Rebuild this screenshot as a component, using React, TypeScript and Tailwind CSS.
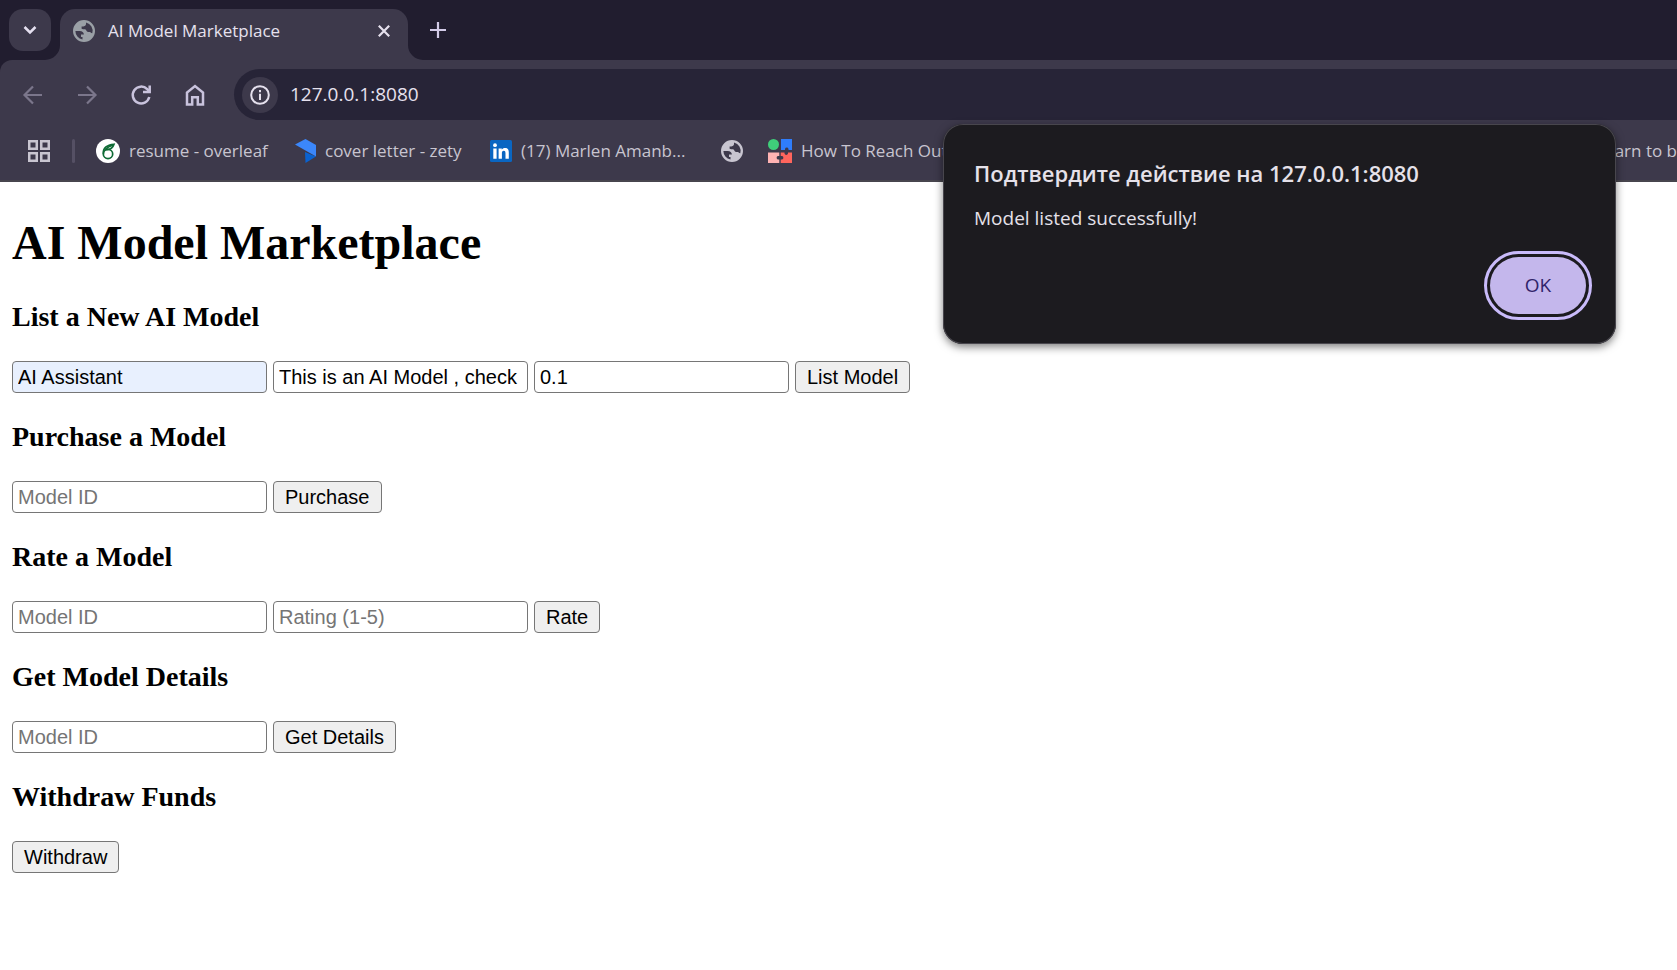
import React, { useState } from "react";

const uiFont = "font-['Open_Sans',sans-serif]";

function Globe({ className }: { className: string }) {
  return (
    <svg viewBox="0 0 22 22" className={className} aria-hidden="true">
      <path
        fill="currentColor"
        fillRule="evenodd"
        d="M11 0a11 11 0 1 0 0 22a11 11 0 0 0 0-22ZM2.400 11H6.800C9.300 11 10.700 12.300 10.900 14.600H8V17H9.500V19.600A8.700 8.700 0 0 1 2.400 11ZM13 2.500V4.200C13 6 11 6.500 8.600 6.500V8.700C9.300 9.300 11 9 12 9.300C13.600 9.800 13.300 11.900 15 11.900H16.800C17.800 11.900 17.600 13 19.300 13.300A8.700 8.700 0 0 0 13 2.500Z"
      />
    </svg>
  );
}

function Overleaf() {
  return (
    <svg viewBox="0 0 24 24" className="size-6 shrink-0" aria-hidden="true">
      <circle cx="12" cy="12" r="12" fill="#fff" />
      <g fill="none" stroke="#0f6b35" strokeWidth="1.700" strokeLinecap="round">
        <ellipse cx="12" cy="15" rx="4.700" ry="4.600" />
        <path d="M7.400 14.500C6.800 9.500 10.500 5.800 18 5.300C16.800 9 13.500 10.600 10.800 10.600" />
        <path d="M9.800 10.200C11.500 8.500 13.500 7.200 16 6.500" />
      </g>
    </svg>
  );
}

function Zety() {
  return (
    <svg viewBox="0 0 21 24" className="h-6 w-[21px] shrink-0" aria-hidden="true">
      <path fill="#0a62d0" d="M10 13L21 17.500L10.500 24Z" />
      <path fill="#3b87fb" d="M0 5.500L10.500 0L21 6V17.500Z" />
    </svg>
  );
}

function LinkedIn() {
  return (
    <svg viewBox="0 0 22 22" className="size-[22px] shrink-0" aria-hidden="true">
      <rect width="22" height="22" rx="1.500" fill="#0a66c2" />
      <g fill="#fff">
        <circle cx="5" cy="5.200" r="1.900" />
        <path d="M3.300 8.400h3.300v10.300H3.300ZM8.600 8.400h3.200v1.400c.6-1 1.700-1.700 3.200-1.700 3 0 3.800 2 3.800 4.600v6h-3.300v-5.300c0-1.300-.2-2.600-1.700-2.600s-1.900 1.200-1.900 2.500v5.400H8.600Z" />
      </g>
    </svg>
  );
}

function Puzzle() {
  return (
    <svg viewBox="0 0 24 24" className="size-6 shrink-0" aria-hidden="true">
      <circle cx="5.500" cy="5.500" r="5.500" fill="#3fcf7a" />
      <path fill="#2f7dfb" d="M13 0H24V11H20.500V10A1.800 1.800 0 0 0 17 10V11H13Z" />
      <path fill="#ffb3b3" d="M0 13.500H11.300V17H10A1.800 1.800 0 0 0 10 20.500H11.300V24H0Z" />
      <path fill="#ff655d" d="M12.700 13.500H16.500V14.500A1.800 1.800 0 0 0 20 14.500V13.500H24V24H12.700V20.500H14A1.800 1.800 0 0 0 14 17H12.700Z" />
    </svg>
  );
}

function Bookmark({
  icon,
  label,
  className = "",
}: {
  icon: React.ReactNode;
  label?: string;
  className?: string;
}) {
  return (
    <a href="#" className={`flex shrink-0 items-center gap-[9px] whitespace-nowrap ${className}`}>
      {icon}
      {label && <span>{label}</span>}
    </a>
  );
}

function ToolButton({ label, muted, children }: { label: string; muted?: boolean; children: React.ReactNode }) {
  return (
    <button
      type="button"
      aria-label={label}
      className={`grid size-[54px] place-items-center ${muted ? "text-[#7b768b]" : "text-[#c9c3dd]"}`}
    >
      <svg viewBox="0 0 24 24" className="size-6" fill="none" stroke="currentColor" strokeWidth="2.200">
        {children}
      </svg>
    </button>
  );
}

function Chrome() {
  return (
    <header className={`bg-[#211d2f] ${uiFont}`}>
      <div className="flex h-[60px] items-end">
        <button
          type="button"
          aria-label="Search tabs"
          className="mb-[9px] ml-[9px] grid size-[42px] place-items-center rounded-[14px] bg-[#3d394b] text-[#e5e0f0]"
        >
          <svg viewBox="0 0 14 10" className="h-[10px] w-[14px]" fill="none" stroke="currentColor" strokeWidth="2.500">
            <path d="M1.500 2L7 7.500L12.500 2" />
          </svg>
        </button>
        <div className="relative ml-[9px] flex h-[51px] w-[348px] items-center rounded-t-[15px] bg-[#3d394b] pr-[15px] pb-2 pl-[13px]">
          <svg viewBox="0 0 15 15" className="absolute bottom-0 -left-[15px] size-[15px] text-[#3d394b]" aria-hidden="true">
            <path fill="currentColor" d="M15 0V15H0A15 15 0 0 0 15 0Z" />
          </svg>
          <svg viewBox="0 0 15 15" className="absolute -right-[15px] bottom-0 size-[15px] text-[#3d394b]" aria-hidden="true">
            <path fill="currentColor" d="M0 0V15H15A15 15 0 0 1 0 0Z" />
          </svg>
          <Globe className="size-[22px] text-[#9aa0a6]" />
          <span className="ml-[13px] flex-1 text-[17px] whitespace-nowrap text-[#e6e1ee]">AI Model Marketplace</span>
          <button type="button" aria-label="Close tab" className="grid size-[18px] place-items-center text-[#e6e1ee]">
            <svg viewBox="0 0 12 12" className="size-3" fill="none" stroke="currentColor" strokeWidth="2.200">
              <path d="M.8 .8L11.200 11.200M11.200 .8L.8 11.200" />
            </svg>
          </button>
        </div>
        <button type="button" aria-label="New tab" className="mb-[21px] ml-[21px] grid size-[18px] place-items-center text-[#d3cbe8]">
          <svg viewBox="0 0 16 16" className="size-4" fill="none" stroke="currentColor" strokeWidth="2.200">
            <path d="M8 0V16M0 8H16" />
          </svg>
        </button>
      </div>

      <div className="bg-[#211d2f]">
        <div className="rounded-tl-[12px] bg-[#3d394b]">
          <div className="flex h-[69px] items-center pl-[6px]">
            <ToolButton label="Back" muted>
              <path d="M21 12H4M12 3.500L3.500 12L12 20.500" />
            </ToolButton>
            <ToolButton label="Forward" muted>
              <path d="M3 12H20M12 3.500L20.500 12L12 20.500" />
            </ToolButton>
            <ToolButton label="Reload">
              <path d="M20.300 14A8.400 8.400 0 1 1 18.200 6.200L20 8" strokeWidth="2.500" />
              <path d="M20.700 2.500V9H14" strokeWidth="2.500" />
            </ToolButton>
            <ToolButton label="Home">
              <path d="M4 21.500V9.500L12 3L20 9.500V21.500H14.800V14.200H9.200V21.500Z" strokeWidth="2.500" />
            </ToolButton>
            <div className="ml-3 flex h-[51px] flex-1 items-center rounded-l-full bg-[#272437] pl-2">
              <button
                type="button"
                aria-label="View site information"
                className="grid size-9 place-items-center rounded-full bg-[#3d394b] text-[#e6e1ee]"
              >
                <svg viewBox="0 0 20 20" className="size-5" fill="none" stroke="currentColor" strokeWidth="2">
                  <circle cx="10" cy="10" r="8.800" />
                  <path d="M10 8.800V15M10 5V7.200" />
                </svg>
              </button>
              <input
                aria-label="Address and search bar"
                defaultValue="127.0.0.1:8080"
                className="ml-3 min-w-0 flex-1 bg-transparent text-[19px] text-[#e6e1ee] outline-none"
              />
            </div>
          </div>

          <nav
            aria-label="Bookmarks"
            className="flex h-[53px] items-center overflow-hidden border-b-2 border-[#47454d] pb-2 pl-7 text-[17px] text-[#c8c5d0]"
          >
            <button type="button" aria-label="Apps" className="shrink-0">
              <svg viewBox="0 0 22 22" className="size-[22px]" fill="none" stroke="currentColor" strokeWidth="2.500">
                <path d="M1.250 1.250h7.500v7.500h-7.500ZM13.250 1.250h7.500v7.500h-7.500ZM1.250 13.250h7.500v7.500h-7.500ZM13.250 13.250h7.500v7.500h-7.500Z" />
              </svg>
            </button>
            <span className="ml-[22px] h-6 w-[3px] shrink-0 rounded-full bg-[#555064]" />
            <Bookmark className="ml-[21px] w-[199px]" icon={<Overleaf />} label="resume - overleaf" />
            <Bookmark className="w-[195px]" icon={<Zety />} label="cover letter - zety" />
            <Bookmark className="w-[231px]" icon={<LinkedIn />} label="(17) Marlen Amanb..." />
            <Bookmark className="w-[47px]" icon={<Globe className="size-[22px]" />} />
            <Bookmark className="w-[200px]" icon={<Puzzle />} label="How To Reach Out" />
            <Bookmark className="ml-auto" icon={null} label="Learn to b" />
          </nav>
        </div>
      </div>
    </header>
  );
}

const fieldClass =
  "h-8 w-[255px] rounded-[4px] border border-[#767676] px-[5px] text-[20px] leading-6 text-black placeholder:text-[#757575]";
const buttonClass =
  "h-8 rounded-[4px] border border-[#767676] bg-[#efefef] px-[11px] text-[20px] leading-6 text-black";

type Field = { label: string; value?: string; autofilled?: boolean };

function Section({ title, fields, action }: { title: string; fields: Field[]; action: string }) {
  return (
    <section className="flex flex-col gap-7">
      <h3 className="font-['Liberation_Serif',serif] text-[28px] leading-8 font-bold">{title}</h3>
      <form onSubmit={(e) => e.preventDefault()} className="flex gap-[6px] font-['Liberation_Sans',sans-serif]">
        {fields.map((f) => (
          <input
            key={f.label}
            aria-label={f.label}
            placeholder={f.label}
            defaultValue={f.value}
            className={`${fieldClass} ${f.autofilled ? "bg-[#e8f0fe]" : "bg-white"}`}
          />
        ))}
        <button type="submit" className={buttonClass}>
          {action}
        </button>
      </form>
    </section>
  );
}

export default function App() {
  const [open, setOpen] = useState(true);
  return (
    <div className="relative min-h-screen overflow-hidden bg-white text-black">
      <Chrome />
      <main className="flex flex-col gap-7 px-3 pt-[33px]">
        <h1 className="mb-[2px] font-['Liberation_Serif',serif] text-[48px] leading-[56px] font-bold">
          AI Model Marketplace
        </h1>
        <Section
          title="List a New AI Model"
          fields={[
            { label: "Model Name", value: "AI Assistant", autofilled: true },
            { label: "Description", value: "This is an AI Model , check it out" },
            { label: "Price (ETH)", value: "0.1" },
          ]}
          action="List Model"
        />
        <Section title="Purchase a Model" fields={[{ label: "Model ID" }]} action="Purchase" />
        <Section title="Rate a Model" fields={[{ label: "Model ID" }, { label: "Rating (1-5)" }]} action="Rate" />
        <Section title="Get Model Details" fields={[{ label: "Model ID" }]} action="Get Details" />
        <Section title="Withdraw Funds" fields={[]} action="Withdraw" />
      </main>

      {open && (
        <div
          role="alertdialog"
          aria-labelledby="alert-title"
          aria-describedby="alert-text"
          className={`absolute top-[124px] right-[61px] flex h-[220px] w-[673px] flex-col rounded-[20px] bg-[#1c1b1f] pt-[34px] pr-[30px] pb-[30px] pl-[31px] text-[#e5e1e9] shadow-[inset_0_0_0_1px_#48464d,0_3px_8px_rgba(0,0,0,0.5)] ${uiFont}`}
        >
          <h2 id="alert-title" className="text-[22px] leading-[30px] font-semibold whitespace-nowrap">
            Подтвердите действие на 127.0.0.1:8080
          </h2>
          <p id="alert-text" className="mt-4 text-[19px] leading-7">
            Model listed successfully!
          </p>
          <button
            type="button"
            onClick={() => setOpen(false)}
            className="mt-auto h-[57px] w-24 self-end rounded-full bg-[#c4b7ec] text-[19px] font-medium text-[#30246a] outline-3 outline-offset-3 outline-[#c9bbfa]"
          >
            OK
          </button>
        </div>
      )}
    </div>
  );
}
